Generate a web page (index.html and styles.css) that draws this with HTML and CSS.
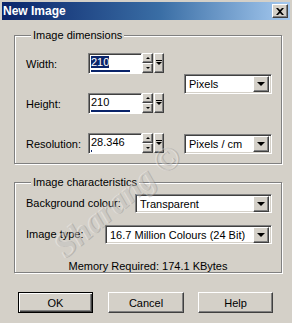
FILE: index.html
```html
<!DOCTYPE html>
<html lang="en">
<head>
  <meta charset="UTF-8">
  <title>New Image</title>
  <link rel="stylesheet" href="styles.css">
</head>
<body>

<div class="window">
  <div class="titlebar">
    <span class="title">New Image</span>
    <button class="close-btn">
      <svg width="8" height="7" viewBox="0 0 8 7"><path d="M0 0h2l2 2 2-2h2L5 3.5 8 7H6L4 5 2 7H0l3-3.5z" fill="#000"/></svg>
    </button>
  </div>

  <div class="dialog-body">
    <fieldset class="group">
      <legend>Image dimensions</legend>
      <div class="dims-grid">
        <label class="row-label">Width:</label>
        <div class="spin">
          <div class="spin-input">
            <span class="value"><span class="selected">210</span></span>
            <span class="slider-bar" style="width: 39px"></span>
          </div>
          <div class="spin-btns">
            <span class="mini-btn"><i class="tri-up"></i></span>
            <span class="mini-btn"><i class="tri-down"></i></span>
          </div>
          <span class="pop-btn"><i class="pop-glyph"></i></span>
        </div>
        <div class="select units">
          <span class="select-text">Pixels</span>
          <span class="arrow-btn"><i class="tri-big"></i></span>
        </div>

        <label class="row-label">Height:</label>
        <div class="spin">
          <div class="spin-input">
            <span class="value">210</span>
            <span class="slider-bar" style="width: 39px"></span>
          </div>
          <div class="spin-btns">
            <span class="mini-btn"><i class="tri-up"></i></span>
            <span class="mini-btn"><i class="tri-down"></i></span>
          </div>
          <span class="pop-btn"><i class="pop-glyph"></i></span>
        </div>

        <label class="row-label">Resolution:</label>
        <div class="spin">
          <div class="spin-input">
            <span class="value">28.346</span>
            <span class="slider-bar" style="width: 1px"></span>
          </div>
          <div class="spin-btns">
            <span class="mini-btn"><i class="tri-up"></i></span>
            <span class="mini-btn"><i class="tri-down"></i></span>
          </div>
          <span class="pop-btn"><i class="pop-glyph"></i></span>
        </div>
        <div class="select res-units">
          <span class="select-text">Pixels / cm</span>
          <span class="arrow-btn"><i class="tri-big"></i></span>
        </div>
      </div>
    </fieldset>

    <fieldset class="group chars">
      <legend>Image characteristics</legend>
      <div class="field-row">
        <label class="row-label">Background colour:</label>
        <div class="select bg-select">
          <span class="select-text">Transparent</span>
          <span class="arrow-btn"><i class="tri-big"></i></span>
        </div>
      </div>
      <div class="field-row">
        <label class="row-label">Image type:</label>
        <div class="select type-select">
          <span class="select-text">16.7 Million Colours (24 Bit)</span>
          <span class="arrow-btn"><i class="tri-big"></i></span>
        </div>
      </div>
      <div class="memory">Memory Required: 174.1 KBytes</div>
    </fieldset>

    <div class="buttons">
      <button class="btn default">OK</button>
      <button class="btn cancel">Cancel</button>
      <button class="btn">Help</button>
    </div>
  </div>

  <span class="watermark">Sharang ©</span>
</div>

</body>
</html>
```

FILE: styles.css
```css
body {
  margin: 0;
  background-color: #d4d0c8;
  font-family: "Liberation Sans", Arial, sans-serif;
  font-size: 11px;
  color: #000;
}
.window {
  position: relative;
  width: 292px;
  height: 323px;
  overflow: hidden;
  background-color: #d4d0c8;
}
.titlebar {
  height: 18px;
  margin: 2px 2px 0 2px;
  padding: 0 2px 0 1px;
  display: flex;
  align-items: center;
  justify-content: space-between;
  background: linear-gradient(to right, #0a246a 0%, #3a6ea5 55%, #a6caf0 100%);
}
.title {
  color: #fff;
  font-weight: bold;
  font-size: 12px;
}
.close-btn {
  width: 16px;
  height: 14px;
  padding: 0;
  display: flex;
  align-items: center;
  justify-content: center;
  background-color: #d4d0c8;
  border: 1px solid;
  border-color: #fff #404040 #404040 #fff;
  box-shadow: inset -1px -1px 0 #808080;
}
.dialog-body {
  padding: 8px 0 0 14px;
}
.group {
  box-sizing: border-box;
  width: 268px;
  min-width: 0;
  margin: 0;
  padding: 11px 0 8px 11px;
  border: 1px solid #808080;
  box-shadow: inset 1px 1px 0 #fff, 1px 1px 0 #fff;
}
.group legend {
  padding: 0 2px;
  margin-left: 5px;
  line-height: 14px;
  background-color: #d4d0c8;
}
.dims-grid {
  display: grid;
  grid-template-columns: 62px 96px 88px;
  grid-template-rows: 22px 22px 22px;
  row-gap: 18px;
  align-items: center;
}
.row-label {
  line-height: 13px;
}
.spin {
  display: flex;
  height: 22px;
}
.spin-input {
  width: 49px;
  height: 18px;
  display: flex;
  flex-direction: column;
  background-color: #fff;
  border: 1px solid;
  border-color: #808080 #fff #fff #808080;
  box-shadow: inset 1px 1px 0 #404040;
  padding: 1px 1px 0 2px;
}
.value {
  line-height: 14px;
}
.selected {
  background-color: #0a246a;
  color: #fff;
}
.slider-bar {
  margin-top: auto;
  height: 2px;
  margin-bottom: 1px;
  background-color: #0a246a;
}
.spin-btns {
  display: flex;
  flex-direction: column;
  height: 20px;
}
.mini-btn, .pop-btn, .arrow-btn {
  box-sizing: border-box;
  display: flex;
  align-items: center;
  justify-content: center;
  background-color: #d4d0c8;
  border: 1px solid;
  border-color: #fff #404040 #404040 #fff;
  box-shadow: inset -1px -1px 0 #808080;
}
.mini-btn {
  width: 11px;
  height: 10px;
}
.pop-btn {
  width: 10px;
  height: 20px;
  margin-left: 1px;
}
.tri-up, .tri-down {
  width: 0;
  height: 0;
  border-left: 2px solid transparent;
  border-right: 2px solid transparent;
}
.tri-up { border-bottom: 2px solid #000; }
.tri-down { border-top: 2px solid #000; }
.pop-glyph {
  width: 0;
  height: 0;
  border-left: 3px solid transparent;
  border-right: 3px solid transparent;
  border-top: 3px solid #000;
  position: relative;
}
.pop-glyph::before {
  content: "";
  position: absolute;
  left: -3px;
  top: -5px;
  width: 6px;
  height: 1px;
  background-color: #000;
}
.select {
  box-sizing: border-box;
  height: 20px;
  display: flex;
  align-items: center;
  background-color: #fff;
  border: 1px solid;
  border-color: #808080 #fff #fff #808080;
  box-shadow: inset 1px 1px 0 #404040, inset -1px -1px 0 #d4d0c8;
  padding: 2px 2px 2px 4px;
}
.select-text {
  flex: 1;
  min-width: 0;
  overflow: hidden;
  line-height: 14px;
  white-space: nowrap;
}
.arrow-btn {
  width: 16px;
  height: 16px;
  flex-shrink: 0;
}
.tri-big {
  width: 0;
  height: 0;
  border-left: 4px solid transparent;
  border-right: 4px solid transparent;
  border-top: 4px solid #000;
}
.units {
  grid-column: 3;
  grid-row: 1 / 3;
  align-self: center;
}
.res-units {
  grid-column: 3;
  grid-row: 3;
}
.chars {
  margin-top: 11px;
  padding-top: 5px;
  padding-bottom: 0;
}
.field-row {
  display: flex;
  align-items: center;
  justify-content: space-between;
  width: 246px;
  height: 19px;
  margin-bottom: 12px;
}
.bg-select { width: 137px; height: 19px; }
.type-select { width: 167px; height: 19px; }
.memory {
  margin: 16px 0 0 -11px;
  text-align: center;
  line-height: 12px;
  height: 12px;
}
.buttons {
  display: flex;
  gap: 15px;
  margin-top: 19px;
  padding-left: 4px;
}
.btn {
  width: 75px;
  height: 21px;
  padding: 0;
  font-family: "Liberation Sans", Arial, sans-serif;
  font-size: 11px;
  background-color: #d4d0c8;
  border: 1px solid;
  border-color: #fff #404040 #404040 #fff;
  box-shadow: inset -1px -1px 0 #808080;
}
.btn.cancel { width: 76px; margin-right: -1px; }
.btn.default {
  border: 1px solid #000;
  box-shadow: inset 1px 1px 0 #fff, inset -1px -1px 0 #404040, inset -2px -2px 0 #808080;
}
.watermark {
  position: absolute;
  left: 12px;
  top: 182px;
  width: 210px;
  text-align: center;
  transform: rotate(-40deg);
  font-family: "Liberation Serif", serif;
  font-style: italic;
  font-weight: bold;
  font-size: 34px;
  color: rgba(255, 255, 255, 0.3);
  text-shadow: 1px 1px 0 rgba(110, 110, 110, 0.28);
  pointer-events: none;
}
```
